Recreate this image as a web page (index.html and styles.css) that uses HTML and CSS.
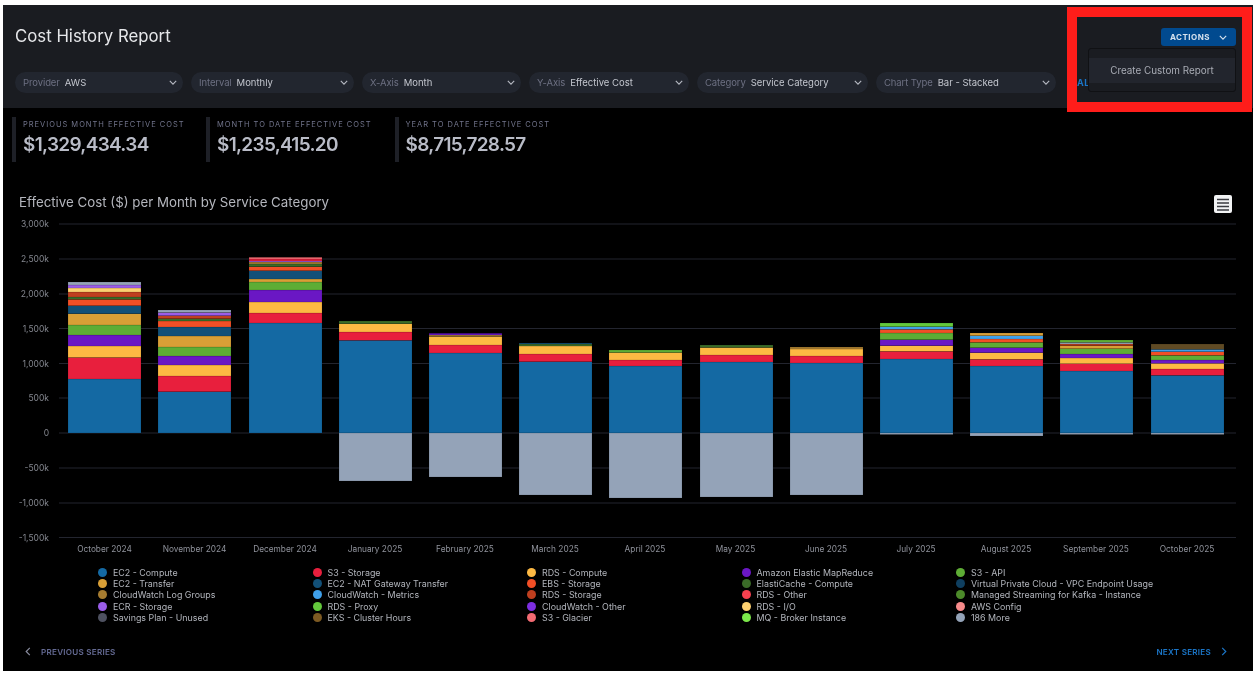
FILE: index.html
```html
<!DOCTYPE html>
<html lang="en">
<head>
<meta charset="utf-8">
<title>Cost History Report</title>
<link rel="stylesheet" href="styles.css">
</head>
<body>
<div class="app">
  <header class="header">
    <div class="title-row">
      <h1 class="title">Cost History Report</h1>
      <button class="actions">ACTIONS
        <svg class="chev" viewBox="0 0 10 6"><path d="M1 1l4 4 4-4"/></svg>
      </button>
    </div>
    <div class="filters">
      <div class="pill w-provider"><span class="lbl">Provider</span><span class="val">AWS</span><svg class="chev" viewBox="0 0 10 6"><path d="M1 1l4 4 4-4"/></svg></div>
      <div class="pill w-interval"><span class="lbl">Interval</span><span class="val">Monthly</span><svg class="chev" viewBox="0 0 10 6"><path d="M1 1l4 4 4-4"/></svg></div>
      <div class="pill w-xaxis"><span class="lbl">X-Axis</span><span class="val">Month</span><svg class="chev" viewBox="0 0 10 6"><path d="M1 1l4 4 4-4"/></svg></div>
      <div class="pill w-yaxis"><span class="lbl">Y-Axis</span><span class="val">Effective Cost</span><svg class="chev" viewBox="0 0 10 6"><path d="M1 1l4 4 4-4"/></svg></div>
      <div class="pill w-category"><span class="lbl">Category</span><span class="val">Service Category</span><svg class="chev" viewBox="0 0 10 6"><path d="M1 1l4 4 4-4"/></svg></div>
      <div class="pill w-type"><span class="lbl">Chart Type</span><span class="val">Bar - Stacked</span><svg class="chev" viewBox="0 0 10 6"><path d="M1 1l4 4 4-4"/></svg></div>
      <a class="all-link">AL</a>
    </div>
  </header>

  <div class="menu"><div class="menu-item">Create Custom Report</div></div>
  <div class="highlight"></div>

  <section class="stats">
    <div class="stat s1"><div class="stat-label">PREVIOUS MONTH EFFECTIVE COST</div><div class="stat-value">$1,329,434.34</div></div>
    <div class="stat s2"><div class="stat-label">MONTH TO DATE EFFECTIVE COST</div><div class="stat-value">$1,235,415.20</div></div>
    <div class="stat"><div class="stat-label">YEAR TO DATE EFFECTIVE COST</div><div class="stat-value">$8,715,728.57</div></div>
  </section>

  <svg class="chart" viewBox="3 190 1250 368" width="1250" height="368">
    <text class="chart-title" x="19" y="207">Effective Cost ($) per Month by Service Category</text>
    <g class="menu-icon">
      <rect class="mi-bg" x="1214" y="195" width="18" height="18" rx="2"/>
      <path class="mi-lines" d="M1217 199.5h12M1217 203h12M1217 206.500h12M1217 210h12"/>
    </g>
    <g class="grid">
      <path d="M59 224H1236M59 259H1236M59 294H1236M59 328.500H1236M59 363.500H1236M59 398H1236M59 433H1236M59 468H1236M59 503H1236M59 537.500H1236"/>
    </g>
    <g class="y-labels">
      <text x="49" y="227">3,000k</text>
      <text x="49" y="262">2,500k</text>
      <text x="49" y="297">2,000k</text>
      <text x="49" y="331.500">1,500k</text>
      <text x="49" y="366.500">1,000k</text>
      <text x="49" y="401">500k</text>
      <text x="49" y="436">0</text>
      <text x="49" y="471">-500k</text>
      <text x="49" y="506">-1,000k</text>
      <text x="49" y="540.500">-1,500k</text>
    </g>
    <g class="bars">
      <g transform="translate(68)">
        <rect class="c1" y="379" height="54"/><rect class="c2" y="357.500" height="21.500"/><rect class="c3" y="346" height="11.500"/><rect class="c4" y="335" height="11"/><rect class="c5" y="325" height="10"/><rect class="c6" y="313.700" height="11.300"/><rect class="c7" y="305.700" height="8"/><rect class="c8" y="299.300" height="6.400"/><rect class="c9" y="297" height="2.300"/><rect class="c13" y="292" height="5"/><rect class="c19" y="288" height="4"/><rect class="c21" y="285" height="3"/><rect class="c25" y="282" height="3"/>
      </g>
      <g transform="translate(158)">
        <rect class="c1" y="391.700" height="41.300"/><rect class="c2" y="376" height="15.700"/><rect class="c3" y="365" height="11"/><rect class="c4" y="356" height="9"/><rect class="c5" y="347" height="9"/><rect class="c6" y="336" height="11"/><rect class="c7" y="327" height="9"/><rect class="c8" y="321" height="6"/><rect class="c9" y="318.700" height="2.300"/><rect class="c13" y="315.700" height="3"/><rect class="c21" y="312.500" height="3.200"/><rect class="c25" y="310" height="2.500"/>
      </g>
      <g transform="translate(249)">
        <rect class="c1" y="323" height="110"/><rect class="c2" y="313" height="10"/><rect class="c3" y="302" height="11"/><rect class="c4" y="290" height="12"/><rect class="c5" y="282" height="8"/><rect class="c6" y="279" height="3"/><rect class="c7" y="270.700" height="8.300"/><rect class="c8" y="266.700" height="4"/><rect class="c9" y="264" height="2.700"/><rect class="c11" y="262" height="2"/><rect class="c21" y="261" height="1"/><rect class="c2" y="259" height="2"/><rect class="c24" y="257.300" height="1.700"/>
      </g>
      <g transform="translate(339)">
        <rect class="c1" y="340.300" height="92.700"/><rect class="c2" y="332" height="8.300"/><rect class="c3" y="323.700" height="8.300"/><rect class="c9" y="321" height="2.700"/>
        <rect class="c25" y="433" height="48"/>
      </g>
      <g transform="translate(429)">
        <rect class="c1" y="353" height="80"/><rect class="c2" y="345" height="8"/><rect class="c3" y="336.700" height="8.300"/><rect class="c11" y="335" height="1.700"/><rect class="c4" y="333.300" height="1.700"/>
        <rect class="c25" y="433" height="44"/>
      </g>
      <g transform="translate(519)">
        <rect class="c1" y="361.700" height="71.300"/><rect class="c2" y="354" height="7.700"/><rect class="c3" y="346" height="8"/><rect class="c9" y="344" height="2"/><rect class="c7" y="343" height="1"/>
        <rect class="c25" y="433" height="62"/>
      </g>
      <g transform="translate(609)">
        <rect class="c1" y="366" height="67"/><rect class="c2" y="360" height="6"/><rect class="c3" y="352.500" height="7.500"/><rect class="c5" y="350" height="2.500"/>
        <rect class="c25" y="433" height="65"/>
      </g>
      <g transform="translate(700)">
        <rect class="c1" y="362" height="71"/><rect class="c2" y="355" height="7"/><rect class="c3" y="347.500" height="7.500"/><rect class="c9" y="345" height="2.500"/>
        <rect class="c25" y="433" height="64"/>
      </g>
      <g transform="translate(790)">
        <rect class="c1" y="363" height="70"/><rect class="c2" y="356" height="7"/><rect class="c3" y="349" height="7"/><rect class="c11" y="347" height="2"/>
        <rect class="c25" y="433" height="62"/>
      </g>
      <g transform="translate(880)">
        <rect class="c1" y="359" height="74"/><rect class="c2" y="351.300" height="7.700"/><rect class="c3" y="345.700" height="5.600"/><rect class="c4" y="339.700" height="6"/><rect class="c5" y="333" height="6.700"/><rect class="c8" y="329.300" height="3.700"/><rect class="c12" y="326.700" height="2.600"/><rect class="c17" y="323" height="3.700"/>
        <rect class="c25" y="433" height="1.500"/>
      </g>
      <g transform="translate(970)">
        <rect class="c1" y="366" height="67"/><rect class="c2" y="359.300" height="6.700"/><rect class="c3" y="352.700" height="6.600"/><rect class="c4" y="347.700" height="5"/><rect class="c5" y="342.300" height="5.400"/><rect class="c8" y="339" height="3.300"/><rect class="c12" y="335.700" height="3.300"/><rect class="c6" y="333" height="2.700"/>
        <rect class="c25" y="433" height="3"/>
      </g>
      <g transform="translate(1060)">
        <rect class="c1" y="371" height="62"/><rect class="c2" y="363.700" height="7.300"/><rect class="c3" y="358" height="5.700"/><rect class="c4" y="354" height="4"/><rect class="c5" y="348.700" height="5.300"/><rect class="c6" y="345.700" height="3"/><rect class="c13" y="344" height="1.700"/><rect class="c25" y="342.300" height="1.700"/><rect class="c5" y="340" height="2.300"/>
        <rect class="c25" y="433" height="1.500"/>
      </g>
      <g transform="translate(1151)">
        <rect class="c1" y="375.300" height="57.700"/><rect class="c2" y="369" height="6.300"/><rect class="c3" y="363.300" height="5.700"/><rect class="c4" y="360" height="3.300"/><rect class="c5" y="355.300" height="4.700"/><rect class="c8" y="351.700" height="3.600"/><rect class="c12" y="349.300" height="2.400"/><rect class="c22" y="344" height="5.300"/>
        <rect class="c25" y="433" height="1.500"/>
      </g>
    </g>
    <g class="x-labels">
      <text x="104.500" y="552">October 2024</text>
      <text x="194.500" y="552">November 2024</text>
      <text x="285" y="552">December 2024</text>
      <text x="375" y="552">January 2025</text>
      <text x="465" y="552">February 2025</text>
      <text x="555" y="552">March 2025</text>
      <text x="645" y="552">April 2025</text>
      <text x="735.500" y="552">May 2025</text>
      <text x="826" y="552">June 2025</text>
      <text x="916" y="552">July 2025</text>
      <text x="1006" y="552">August 2025</text>
      <text x="1096" y="552">September 2025</text>
      <text x="1187" y="552">October 2025</text>
    </g>
  </svg>

  <ul class="legend">
    <li><i class="dot d1"></i>EC2 - Compute</li>
    <li><i class="dot d2"></i>S3 - Storage</li>
    <li><i class="dot d3"></i>RDS - Compute</li>
    <li><i class="dot d4"></i>Amazon Elastic MapReduce</li>
    <li><i class="dot d5"></i>S3 - API</li>
    <li><i class="dot d6"></i>EC2 - Transfer</li>
    <li><i class="dot d7"></i>EC2 - NAT Gateway Transfer</li>
    <li><i class="dot d8"></i>EBS - Storage</li>
    <li><i class="dot d9"></i>ElastiCache - Compute</li>
    <li><i class="dot d10"></i>Virtual Private Cloud - VPC Endpoint Usage</li>
    <li><i class="dot d11"></i>CloudWatch Log Groups</li>
    <li><i class="dot d12"></i>CloudWatch - Metrics</li>
    <li><i class="dot d13"></i>RDS - Storage</li>
    <li><i class="dot d14"></i>RDS - Other</li>
    <li><i class="dot d15"></i>Managed Streaming for Kafka - Instance</li>
    <li><i class="dot d16"></i>ECR - Storage</li>
    <li><i class="dot d17"></i>RDS - Proxy</li>
    <li><i class="dot d18"></i>CloudWatch - Other</li>
    <li><i class="dot d19"></i>RDS - I/O</li>
    <li><i class="dot d20"></i>AWS Config</li>
    <li><i class="dot d21"></i>Savings Plan - Unused</li>
    <li><i class="dot d22"></i>EKS - Cluster Hours</li>
    <li><i class="dot d23"></i>S3 - Glacier</li>
    <li><i class="dot d24"></i>MQ - Broker Instance</li>
    <li><i class="dot d25"></i>186 More</li>
  </ul>

  <footer class="pager">
    <a class="page-link prev"><svg class="chev-side" viewBox="0 0 6 10"><path d="M5 1L1 5l4 4"/></svg>PREVIOUS SERIES</a>
    <a class="page-link next">NEXT SERIES<svg class="chev-side" viewBox="0 0 6 10"><path d="M1 1l4 4-4 4"/></svg></a>
  </footer>
</div>
</body>
</html>
```
FILE: styles.css
```css
* { box-sizing: border-box; }
html, body { margin: 0; height: 100%; background: #fff; overflow: hidden; }
body { padding: 5px 2px 5px 3px; font-family: Inter, "Noto Sans", sans-serif; }

.app {
  position: relative;
  width: 1250px;
  height: 666px;
  background: #000;
  display: flex;
  flex-direction: column;
}

/* The reference is a slightly soft capture */
.header, .menu, .stats, .chart, .legend, .pager { filter: blur(.35px); }

.header {
  height: 103px;
  padding: 20px 17px 0 12px;
  background: #1a1c21;
  flex: none;
}
.title-row { display: flex; justify-content: space-between; align-items: flex-start; height: 47px; }
.title { margin: 1px 0 0; font-size: 16.800px; line-height: 20px; font-weight: 400; color: #e6e7ea; }

.actions {
  display: flex;
  align-items: center;
  justify-content: center;
  gap: 9px;
  width: 75px;
  height: 18px;
  margin-top: 3px;
  border: 0;
  border-radius: 3px;
  background: #014a8f;
  color: #d7e2ee;
  font: 700 8px Inter, sans-serif;
  letter-spacing: .5px;
}
.chev { width: 8px; height: 5px; fill: none; stroke: currentColor; stroke-width: 1.400; flex: none; }

.filters { display: flex; gap: 8px; align-items: center; }
.pill {
  display: flex;
  align-items: center;
  height: 21px;
  padding: 0 6px 0 8px;
  border-radius: 11px;
  background: #22262f;
  font-size: 9.500px;
  white-space: nowrap;
}
.pill .chev { margin-left: auto; color: #b6b9c2; }
.w-provider { width: 168px; }
.w-interval { width: 163px; }
.w-xaxis { width: 159px; }
.w-yaxis { width: 160px; }
.w-category { width: 171px; }
.w-type { width: 180px; }
.lbl { color: #6d7082; margin-right: 5px; letter-spacing: -.1px; }
.val { color: #c3c6ce; }
.all-link { margin-left: 13px; color: #1b76c8; font-size: 9px; font-weight: 700; letter-spacing: .5px; }

.menu {
  position: absolute;
  left: 1085px;
  top: 43px;
  width: 148px;
  height: 44px;
  padding-top: 9px;
  background: #1a1c21;
  border: 1px solid #101114;
  border-radius: 3px;
}
.menu-item {
  height: 25px;
  line-height: 25px;
  text-align: center;
  background: #22252d;
  color: #a9acb5;
  font-size: 9.900px;
}
.highlight {
  position: absolute;
  left: 1064px;
  top: 2px;
  width: 185px;
  height: 105px;
  border: 10px solid #ff1d1a;
  pointer-events: none;
}

.stats { display: flex; padding: 9px 0 0 9px; height: 82px; flex: none; }
.stat {
  height: 45px;
  padding: 3px 0 0 7px;
  border-left: 4px solid #1e2027;
}
.s1 { width: 194px; }
.s2 { width: 188.500px; }
.stat-label { font-size: 7.500px; line-height: 10px; letter-spacing: .98px; color: #70738a; white-space: nowrap; }
.stat-value { margin-top: 2px; font-size: 19px; line-height: 26px; font-weight: 600; letter-spacing: -.7px; color: #b9bcc7; white-space: nowrap; }

.chart { display: block; flex: none; }
.chart-title { font-size: 13.300px; fill: #b4b6bd; font-family: Inter, sans-serif; }
.mi-bg { fill: #f2f3f4; }
.mi-lines { stroke: #3a3b40; stroke-width: 1.600; fill: none; }
.grid path { stroke: #23252f; stroke-width: 1; fill: none; }
.y-labels text { text-anchor: end; font-size: 8.500px; fill: #84878f; font-family: Inter, sans-serif; }
.x-labels text { text-anchor: middle; font-size: 8.300px; fill: #90939c; font-family: Inter, sans-serif; }

.bars rect { width: 73px; stroke: rgba(0, 0, 0, .22); stroke-width: .6; }
.c1 { fill: #1469a3; }
.c2 { fill: #e81f3d; }
.c3 { fill: #fdb943; }
.c4 { fill: #6a17c4; }
.c5 { fill: #5ead35; }
.c6 { fill: #d99f36; }
.c7 { fill: #125078; }
.c8 { fill: #f24f26; }
.c9 { fill: #3a6b28; }
.c11 { fill: #a67c30; }
.c12 { fill: #3fa0ea; }
.c13 { fill: #bf3f1f; }
.c17 { fill: #63c83c; }
.c19 { fill: #fdd070; }
.c21 { fill: #9a5de8; }
.c22 { fill: #5f4a24; }
.c24 { fill: #f36b73; }
.c25 { fill: #94a3b8; }

.legend {
  display: grid;
  grid-template-columns: repeat(5, 214.500px);
  grid-auto-rows: 11.200px;
  margin: 9px 0 0;
  padding: 0 0 0 95px;
  list-style: none;
  font-size: 8.900px;
  color: #b2b5bc;
  flex: none;
}
.legend li { display: flex; align-items: center; white-space: nowrap; }
.dot { width: 9px; height: 9px; border-radius: 50%; margin-right: 6px; flex: none; }
.d1 { background: #1469a3; }
.d2 { background: #e81f3d; }
.d3 { background: #fdb943; }
.d4 { background: #6a17c4; }
.d5 { background: #5ead35; }
.d6 { background: #d99f36; }
.d7 { background: #125078; }
.d8 { background: #f24f26; }
.d9 { background: #3a6b28; }
.d10 { background: #0f3f60; }
.d11 { background: #a67c30; }
.d12 { background: #3fa0ea; }
.d13 { background: #bf3f1f; }
.d14 { background: #f5404f; }
.d15 { background: #4c8a2a; }
.d16 { background: #9a5de8; }
.d17 { background: #63c83c; }
.d18 { background: #7d2ee0; }
.d19 { background: #fdd070; }
.d20 { background: #f78b8b; }
.d21 { background: #4e5160; }
.d22 { background: #7d5a22; }
.d23 { background: #f36b73; }
.d24 { background: #7ce84a; }
.d25 { background: #94a3b8; }

.pager {
  display: flex;
  justify-content: space-between;
  align-items: center;
  margin-top: 24px;
  padding: 0 26px 0 22px;
  font-size: 8.100px;
  font-weight: 600;
  letter-spacing: .25px;
}
.page-link { display: flex; align-items: center; gap: 10px; }
.prev { color: #646a93; }
.next { color: #1b76c8; }
.chev-side { width: 6px; height: 9px; fill: none; stroke: currentColor; stroke-width: 1.300; }
.prev .chev-side { color: #8a8da0; }
```
